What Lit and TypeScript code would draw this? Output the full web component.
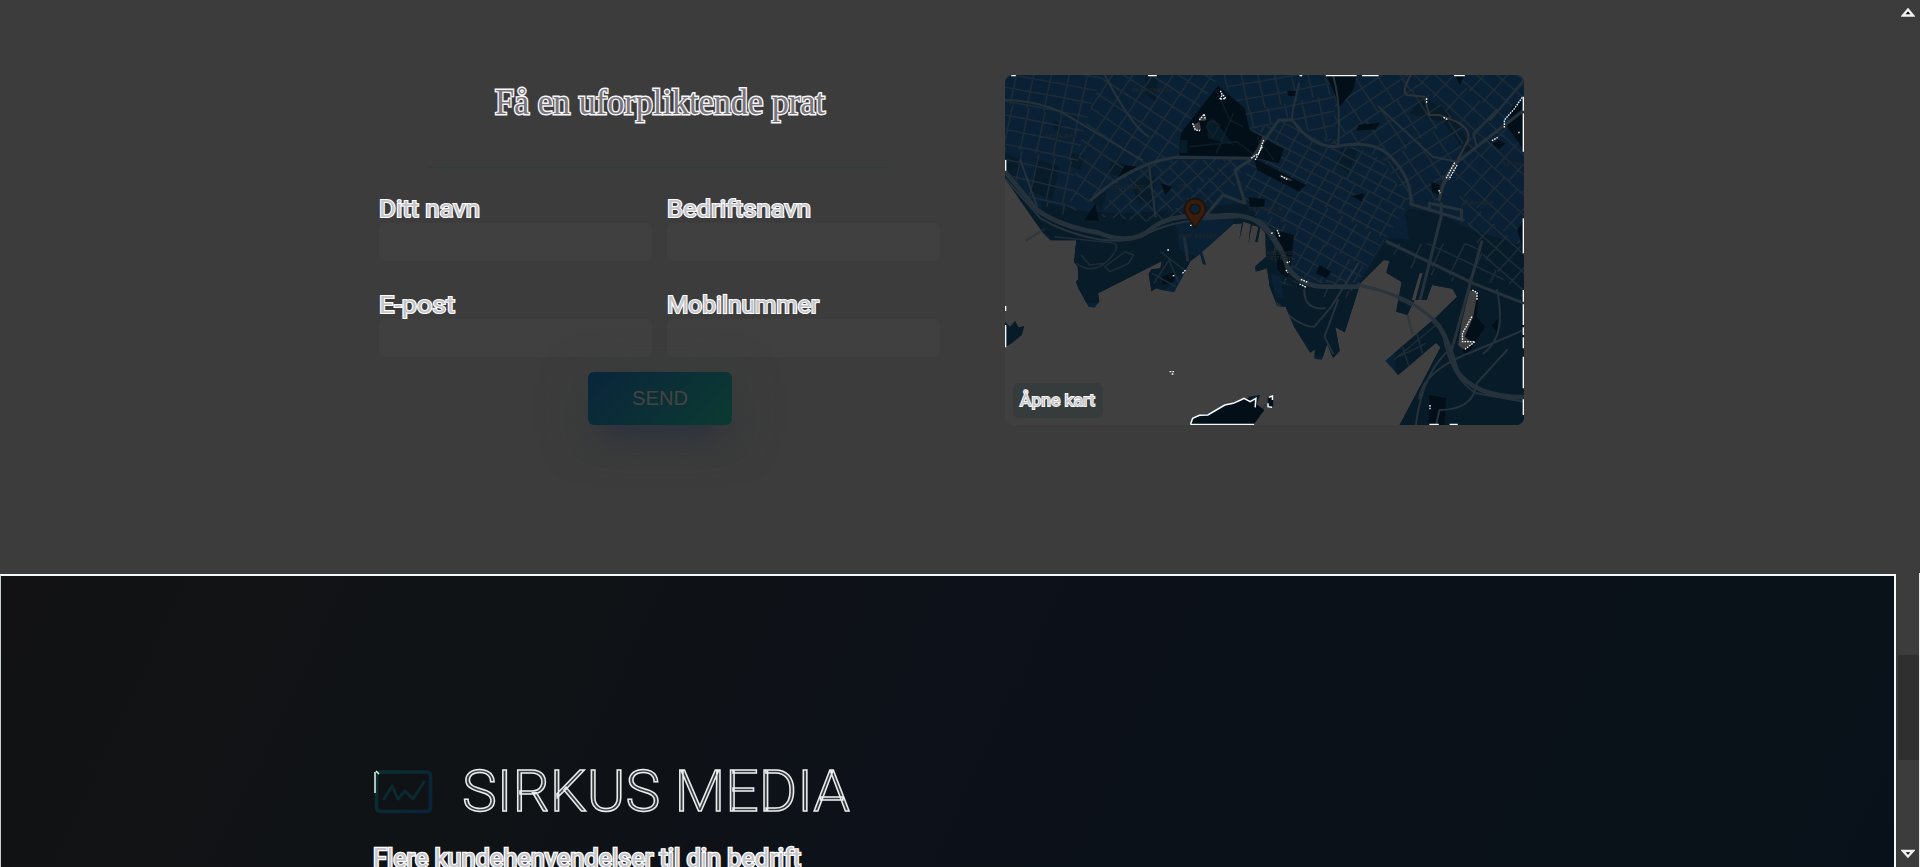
import { LitElement, html, svg, css } from "lit";
import { customElement, property } from "lit/decorators.js";

/* A line of text fitted to an exact width, with an outlined face. */
const line = (cls: string, text: string, w: number, h: number, base: number) => html`
  <svg class="line ${cls}" width=${w + 4} height=${h} viewBox="-2 0 ${w + 4} ${h}">
    <text x="0" y=${base} textLength=${w} lengthAdjust="spacingAndGlyphs">${text}</text>
  </svg>`;

const grid = (cx: number, cy: number, angle: number, size: number, a: number, b: number, seed: number) => {
  const rad = (angle * Math.PI) / 180;
  const c = Math.cos(rad), s = Math.sin(rad);
  const pt = (u: number, v: number) => `${(cx + u * c - v * s).toFixed(0)} ${(cy + u * s + v * c).toFixed(0)}`;
  const j = (n: number) => Math.sin(n * 12.9 + seed * 7.3) * 11;
  let d = "";
  let n = 0;
  for (let v = -size; v <= size; v += a) {
    n++;
    d += `M${pt(-size, v + j(n))}L${pt(0, v + j(n + 3))}L${pt(size, v + j(n + 5))}`;
  }
  for (let u = -size; u <= size; u += b) {
    n++;
    for (let v = -size; v < size; v += a * 3) {
      const o = j(n + v) * 0.8;
      d += `M${pt(u + o, v)}L${pt(u + o, v + a * 3)}`;
    }
  }
  return d;
};

const districts = [
  { id: "d1", area: "15,15 300,15 250,170 200,440 80,380 15,290", d: grid(140, 200, 12, 330, 43, 52, 1) },
  { id: "d2", area: "300,15 650,15 540,190 535,255 430,285 280,385 200,440 250,170", d: grid(400, 180, 33, 330, 44, 47, 2) },
  { id: "d3", area: "440,275 690,265 720,320 620,430 480,460 300,440 330,370", d: grid(550, 350, -44, 280, 34, 42, 3) },
  { id: "d4", area: "650,15 1000,15 980,225 860,150 740,180", d: grid(840, 110, -12, 260, 42, 51, 4) },
  { id: "d5", area: "740,180 860,150 970,230 1110,230 1210,400 1130,520 1060,640 870,640 830,520 720,400", d: grid(960, 400, 29, 400, 34, 46, 5) },
  { id: "d6", area: "1000,15 1210,15 1390,190 1340,270 1300,390 1210,400 1110,230 980,225", d: grid(1150, 170, -33, 330, 46, 55, 6) },
  { id: "d7", area: "1210,15 1550,15 1550,690 1430,560 1370,430 1340,290 1390,190", d: grid(1430, 250, 42, 480, 41, 53, 7) },
  { id: "d8", area: "1130,520 1400,520 1500,640 1350,640 1200,590", d: grid(1300, 560, 25, 250, 48, 61, 8) },
  { id: "d9", area: "790,480 870,620 1060,640 1010,700 870,650 830,640", d: grid(920, 680, 21, 220, 55, 62, 9) },
];

const coast =
  "M15 15H1550V1065H1182L1250 935L1303 832L1290 818L1178 915L1140 872L1290 742L1352 680L1338 656L1278 645L1262 690L1226 690L1205 735L1172 725L1188 636L1143 608L1152 572L1135 570L1066 640L1020 787L992 772L1005 842L985 865L968 822L952 869L930 866L932 838L918 848L870 770L845 710L820 708L798 650L790 595L756 605L754 590L787 560L785 490L770 472L762 515L755 516L765 470L745 465L735 520L742 462L720 455L708 510L716 460L690 462L598 546L610 585L600 583L592 552L564 572L540 620L515 667L480 660L462 655L448 664L440 612L448 598L475 595L478 574L450 588L290 670L294 694L280 713L262 710L232 655L225 635L232 628L230 590L219 575L226 511L148 511L128 490L15 325Z";

@customElement("city-map")
export class CityMap extends LitElement {
  static styles = css`
    :host { display: block; position: relative; width: 519px; height: 350px; border-radius: 8px; background: #404040; }
    .canvas { display: block; width: 519px; height: 350px; border-radius: 8px; }
    .land { fill: #0a2135; }
    .low { fill: #081b29; }
    .park { fill: #030f18; }
    .water { fill: #404040; }
    .street { fill: none; stroke: #1d2c37; stroke-width: 4.6; }
    .road { fill: none; stroke: #25323b; stroke-width: 9; stroke-linejoin: round; stroke-linecap: round; }
    .wide { stroke-width: 14; }
    .thin { stroke-width: 6; }
    .brown { stroke: #303235; stroke-width: 6; }
    .spark { fill: none; stroke: #f4fafc; stroke-width: 4; stroke-dasharray: 5 3; }
    .edge { fill: none; stroke: #f4fafc; stroke-width: 8; }
    .shore { fill: none; stroke: #f4fafc; stroke-width: 4.500; }
    .place { font: 700 17px "Open Sans", sans-serif; letter-spacing: 3px; fill: #18212a; text-anchor: middle; stroke: #242c33; stroke-width: .6; }
    .small { font-size: 14px; letter-spacing: 1.5px; }
    .pin { fill: #3a1c0c; stroke: #1b130f; stroke-width: 5; }
    .hole { fill: #0d2130; stroke: #1b130f; stroke-width: 5; }
    .open { position: absolute; left: 8px; bottom: 7px; width: 90px; height: 35px; border-radius: 6px; background: #353c3b; display: flex; align-items: center; justify-content: center; }
    .line { margin-left: -2px; }
    .line text { font: 400 17px Roboto, sans-serif; fill: #c6c6ca; stroke: #fff; stroke-width: 1.8px; paint-order: stroke; }
  `;

  render() {
    return html`
      <svg class="canvas" viewBox="15 15 1535 1050" preserveAspectRatio="none">
        <defs>
          <clipPath id="coast"><path d=${coast} /></clipPath>
          ${districts.map((x) => svg`<clipPath id=${x.id}><polygon points=${x.area} /></clipPath>`)}
        </defs>
        <path class="land" d=${coast} />
        <g clip-path="url(#coast)">
          <path class="low" d="M15 300L150 450L290 480L380 495L450 470L500 430L580 415L720 400L800 470L850 590L890 640L1060 640L1130 530L1210 415L1290 430L1400 480L1550 530V1065H1170V860L1130 780L1060 660L1020 860H860L780 700L750 550L600 540L450 700H200L150 500L15 420Z" />
          <path class="low" d="M120 395L260 425L400 430L500 420L440 490L350 510L200 490L130 450Z" />
          <path class="land" d="M520 460L690 430L690 465L580 560L530 540ZM800 610L830 620L840 690L815 680ZM1130 420L1200 440L1210 510L1130 500ZM890 520L1060 570L1030 610L870 590Z" />
          <path class="low" d="M105 265L175 290L155 390L95 365ZM380 330L460 320L450 410L410 395ZM325 275L370 280L355 320L325 310ZM265 380L315 365L300 420ZM210 250L248 255L240 300L210 290ZM430 20H465L460 95L430 70ZM1010 235L1060 240L1030 310L995 280ZM1210 130L1250 85L1330 120L1400 240L1380 250L1310 155ZM160 150L185 158L175 185L158 175ZM15 250L65 270L50 320L15 310Z" />
          ${districts.map((x) => svg`<g clip-path="url(#${x.id})"><path class="street" d=${x.d} /></g>`)}
          <path class="park" d="M645 47L724 115L738 180L840 238L825 280L750 262L530 256L535 190ZM752 265L905 345L885 365L760 300ZM965 15H1055L1045 60L1005 110L985 60ZM1345 15H1375L1360 45ZM1060 165L1125 158L1110 178L1055 182ZM250 450L282 402L293 452ZM370 285L412 292L350 320ZM475 340L510 350L490 375ZM735 382L785 388L780 410L740 410ZM850 62H875V78H852ZM1475 210L1495 220L1475 238L1455 220ZM1515 110L1550 90V240L1500 170ZM945 585L980 605L965 625L935 610ZM815 480L870 495L860 590L850 625L820 600ZM1395 655L1415 680L1410 740L1435 770L1378 862L1365 830L1370 780ZM1455 765L1485 735L1470 790ZM1270 975L1320 985L1315 1065H1268ZM1275 335L1300 345L1300 375L1278 365ZM480 620L520 605L515 635L480 645ZM1530 480L1550 450V545ZM1040 378L1078 370L1070 395Z" />
          <path class="low" d="M612 155L635 150L690 225L615 205ZM535 210H555V250H530Z" />
          <path class="street" d="M610 170L630 200L650 165L625 150ZM560 230L700 215L760 260M640 60L680 150L720 170M690 130L640 250M760 200L810 270" opacity=".45" />
          <path class="water" d="M570 165L590 155L595 180L575 182ZM590 140H606V152H590ZM1390 660L1412 670L1400 740L1375 800L1400 820L1370 838L1355 825L1365 760ZM1250 610L1228 692L1218 690L1242 608Z" />
          <path class="road wide" d="M15 305L110 420Q180 470 290 488Q390 530 450 475Q500 430 640 438Q730 425 785 470Q835 530 850 590Q890 650 960 650H1060Q1230 680 1300 770Q1330 820 1350 900Q1400 980 1550 982" />
          <path class="road thin" d="M15 325L120 445Q190 488 290 508Q370 520 420 500Q500 450 650 445L730 440Q800 480 820 540M1060 640Q1240 690 1310 790Q1335 930 1410 970L1550 995" />
          <path class="road" d="M270 390Q390 280 520 262L745 265L825 150H865Q920 230 990 230Q1110 205 1160 265Q1220 330 1215 402L1370 450M740 270L695 300L725 400L660 375L605 440M1145 515L1400 640L1550 700M1305 400V440L1240 700M1425 515L1350 790L1330 860M1300 390Q1310 310 1360 270L1550 120M1270 420V400L1365 420V450" />
          <path class="road thin" d="M15 90Q100 90 180 125L420 270M310 15Q390 170 440 200M885 40Q860 140 865 150M985 15Q1010 100 1000 225M1120 110L1280 260L1350 275M1470 120L1400 190L1410 230M1550 30L1450 150M60 270L110 410M440 280L460 440M1240 985Q1250 900 1410 840L1550 780M1230 1065Q1250 900 1340 830M1290 1065L1300 1020Q1400 1020 1410 940L1500 840M1470 660Q1500 800 1430 850M820 700Q880 770 930 770L980 710L1060 580M900 660Q900 720 960 715M880 730M1000 690L960 800L985 850" />
          <path class="road thin brown" d="M1215 15Q1185 70 1205 75L1255 80L1270 135H1300L1350 155Q1400 180 1380 220L1310 350L1300 390M780 200L750 265M830 318L860 330" />
          <path class="street" d="M225 580Q280 620 330 560Q360 520 330 518L160 500M240 555L265 585L310 580M310 590L370 545L395 555L380 580L325 605ZM450 610L520 650M455 640L500 570L530 640M475 545L545 600M1165 870L1290 765M1190 830L1210 890M1230 780L1250 850M1180 860L1260 820" />
        </g>
        <path class="road" d="M1060 645Q1230 680 1300 770M545 500L555 570" opacity=".8" />
        <path class="road thin" d="M78 512L130 478M1205 735L1220 790M750 1050L785 1005" opacity=".6" />
        <path class="low" d="M15 755L30 770L45 752L55 772L72 768L65 795L35 820L15 832ZM735 980L770 975L755 1015L735 1000Z" />
        <path class="park" d="M563 1065L575 1042L615 1035L665 1005L735 985L755 1000L782 1020L750 1065ZM792 980L808 978V1010H792Z" />
        <path class="shore" d="M564 1062L570 1045L590 1036L615 1035L640 1020L665 1005L690 1000L712 990L722 985L740 995L757 985L755 1012M795 982L806 978V990M793 1000V1010L805 1012" />
        <path class="spark" d="M652 62L658 75L650 88L668 85L660 75M590 150L604 132L608 150M570 160L578 180L592 182M780 210L765 250L742 265M776 230L755 270M832 318L850 328M1262 85V98M1312 142L1326 150M1345 278L1320 325M1352 285L1328 328M1298 360L1302 370M1455 212L1472 202M1545 82L1520 118L1492 150V175M1535 185V190M820 480L828 500M802 490L810 488M848 578L858 575M846 600L852 608M890 628L912 638M886 642L906 652M1397 660L1411 668V690M1396 740L1368 790V815L1405 815L1375 838M502 905H518M508 912H514M540 610L549 600M511 617H518M495 540H500M562 466H567M1272 1005V1018" />
        <path class="edge" d="M33 15H47M438 15H464M886 15H894M964 15H1055M1071 15H1120M1343 15H1375M15 270V302M15 708V723M15 765V832M563 1065H752M1270 1065H1298M1330 1065H1354M1550 80V122M1550 130V245M1550 445V550M1550 660V695M1550 703V765M1550 772V795M1550 802V835M1550 860V955M1550 988V1035" />
        <text class="place" x="182" y="204">FROGNER</text>
        <text class="place small" x="450" y="67">URANIENBORG</text>
        <text class="place small" x="379" y="356">SKILLEBEKK</text>
        <text class="place small" x="544" y="353">VIKA</text>
        <text class="place" x="787" y="423">SENTRUM</text>
        <text class="place small" x="584" y="505">AKER BRYGGE</text>
        <text class="place small" x="831" y="556">AKERSHUS</text>
        <text class="place small" x="831" y="570">FESTNING</text>
        <text class="place small" x="1414" y="405">GRØNLAND</text>
        <text class="place small" x="1515" y="288">TØYEN</text>
        <path class="pin" d="M577 474C568 452 546 440 546 417A31 31 0 0 1 608 417C608 440 586 452 577 474Z" />
        <circle class="hole" cx="577" cy="417" r="15" />
      </svg>
      <div class="open">${line("", "Åpne kart", 75, 28, 19)}</div>
    `;
  }
}

@customElement("form-field")
export class FormField extends LitElement {
  @property() label = "";
  @property({ type: Number }) fit = 100;
  static styles = css`
    :host { display: flex; flex-direction: column; width: 273px; }
    .line { display: block; margin-left: -2px; overflow: visible; }
    .line text { font: 400 24px Roboto, sans-serif; fill: #c4c5ca; stroke: #fff; stroke-width: 2.2px; paint-order: stroke; }
    .box { height: 38px; border-radius: 6px; background: #404040; }
  `;
  render() {
    return html`${line("", this.label, this.fit, 28, 22)}<div class="box"></div>`;
  }
}

@customElement("app-root")
export class AppRoot extends LitElement {
  static styles = css`
    :host { display: flex; width: 1920px; height: 867px; overflow: hidden; background: #3c3c3c; }
    .line { display: block; overflow: visible; }
    .page { width: 1896px; display: flex; flex-direction: column; }
    .contact { flex: none; height: 574px; box-sizing: border-box; padding: 75px 0 0 379px; display: flex; gap: 65px; align-items: flex-start; }
    .form { width: 561px; display: flex; flex-direction: column; align-items: center; }
    .heading text { font: 400 35px "Liberation Serif", serif; fill: #77757b; stroke: #f8f6f8; stroke-width: 2.8px; paint-order: stroke; }
    .rule { width: 461px; height: 1px; margin-top: 32px; background: #2d3d3a; }
    .fields { display: grid; grid-template-columns: 273px 273px; column-gap: 15px; row-gap: 30px; margin-top: 27px; }
    .send { width: 144px; height: 53px; margin-top: 15px; border-radius: 6px; display: flex; align-items: center; justify-content: center; background: linear-gradient(135deg, #0a253b, #0b3a31); box-shadow: 0 20px 30px -12px #292d3e, 0 10px 45px 0 rgba(56, 64, 61, .8); }
    .send text { font: 400 20px "Liberation Sans", sans-serif; fill: #464443; }
    .footer { flex: none; height: 293px; box-sizing: border-box; border: 2px solid #f4fafc; border-left: 1px solid #c8d0d4; border-bottom: 0; padding: 189px 0 0 372px; background: linear-gradient(115deg, #121214 0%, #0f1316 30%, #0d1119 48%, #0a1118 72%, #081119 100%); }
    .brand { display: flex; align-items: center; gap: 27px; height: 54px; }
    .logo { display: block; width: 60px; height: 48px; }
    .name text { font: 300 58px Roboto, sans-serif; fill: #3c3c3c; stroke: #e8edf0; stroke-width: 1.5px; }
    .tag { margin: 25px 0 0 -2px; }
    .tag text { font: 400 25px Roboto, sans-serif; fill: #c6c6ca; stroke: #fff; stroke-width: 2.6px; paint-order: stroke; }
    .scroll { width: 24px; display: flex; flex-direction: column; align-items: center; }
    .up { margin-top: 8px; }
    .arrow { display: block; width: 14px; height: 10px; flex: none; margin-left: -1px; }
    .thumb { width: 21px; height: 105px; margin-top: 637px; background: #2f2f2f; }
    .down { margin-top: 89px; }
    .seam { position: absolute; left: 1919px; top: 573px; width: 1px; height: 294px; background: #e8ecee; }
  `;

  render() {
    return html`
      <div class="page">
        <section class="contact">
          <div class="form">
            ${line("heading", "Få en uforpliktende prat", 330, 60, 39)}
            <div class="rule"></div>
            <div class="fields">
              <form-field label="Ditt navn" fit="101"></form-field>
              <form-field label="Bedriftsnavn" fit="144"></form-field>
              <form-field label="E-post" fit="76"></form-field>
              <form-field label="Mobilnummer" fit="152"></form-field>
            </div>
            <div class="send">${line("", "SEND", 56, 26, 19)}</div>
          </div>
          <city-map></city-map>
        </section>
        <footer class="footer">
          <div class="brand">
            <svg class="logo" viewBox="0 0 60 48">
              <defs><linearGradient id="g" x1="0" y1="0" x2="1" y2=".7"><stop stop-color="#0b302d" /><stop offset="1" stop-color="#09243a" /></linearGradient></defs>
              <path d="M8 4H53Q57.500 4 57.500 8V39Q57.500 43.500 53 43.500H8Q3.500 43.500 3.500 39V8Q3.500 4 8 4Z" fill="none" stroke="url(#g)" stroke-width="3.500" />
              <path d="M11 31L19 18L25 31L32 23L40 31L51 14" fill="none" stroke="#0b2930" stroke-width="3" stroke-linecap="round" stroke-linejoin="round" />
              <path d="M2 4V25M3 3L6 6" stroke="#dff5f1" stroke-width="1.500" />
            </svg>
            ${line("name", "SIRKUS MEDIA", 388, 54, 46)}
          </div>
          ${line("tag", "Flere kundehenvendelser til din bedrift", 428, 30, 23)}
        </footer>
      </div>
      <div class="scroll">
        <svg class="arrow up" viewBox="0 0 14 10"><path d="M7 1.500L12 7.500H2Z" fill="#111" stroke="#f0f0f0" stroke-width="2.300" /></svg>
        <div class="thumb"></div>
        <svg class="arrow down" viewBox="0 0 14 10"><path d="M7 7.500L12 2H2Z" fill="#111" stroke="#f0f0f0" stroke-width="2.300" /></svg>
      </div>
      <div class="seam"></div>
    `;
  }
}
